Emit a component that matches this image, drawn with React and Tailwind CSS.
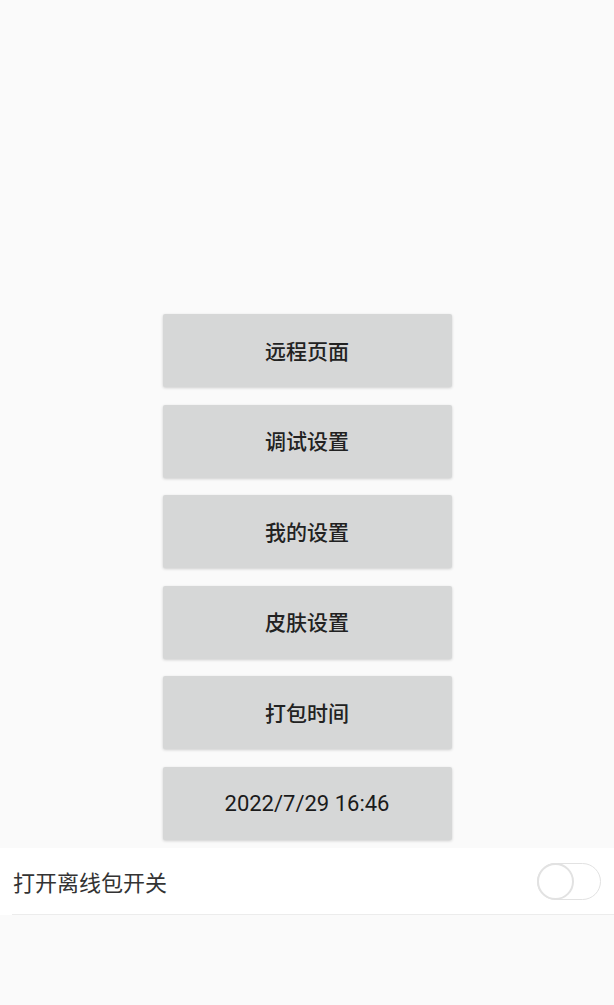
const buttons = ['远程页面', '调试设置', '我的设置', '皮肤设置', '打包时间'];

export default function App() {
  return (
    <div
      className="min-h-screen bg-[#fafafa] pt-[314px]"
      style={{ fontFamily: '"Noto Sans CJK SC", "Noto Sans", sans-serif' }}
    >
      {/* Buttons */}
      <div className="flex flex-col items-center gap-[17.5px]">
        {buttons.map((label) => (
          <button
            key={label}
            className="w-[289px] h-[73px] rounded-[2px] bg-[#d6d7d7] text-[21px] font-medium text-[#222] shadow-[0_1px_3px_rgba(0,0,0,0.18)]"
          >
            {label}
          </button>
        ))}
        <button className="w-[289px] h-[73px] rounded-[2px] bg-[#d6d7d7] font-['Roboto',sans-serif] text-[22px] font-normal text-[#1a1a1a] shadow-[0_1px_3px_rgba(0,0,0,0.18)]">
          2022/7/29 16:46
        </button>
      </div>

      {/* Offline package switch */}
      <div className="mt-[8.5px] bg-white">
        <div className="flex items-center justify-between h-[67px] ml-[12px] pl-[1px] pr-[13px] border-b border-[#ececec]">
          <span className="text-[22px] text-[#333]">打开离线包开关</span>
          <div className="relative w-[64px] h-[37px] rounded-full border border-[#e2e2e2] bg-white">
            <div className="absolute -left-px -top-px w-[37px] h-[37px] rounded-full border-2 border-[#e2e2e2] bg-white" />
          </div>
        </div>
      </div>
    </div>
  );
}
